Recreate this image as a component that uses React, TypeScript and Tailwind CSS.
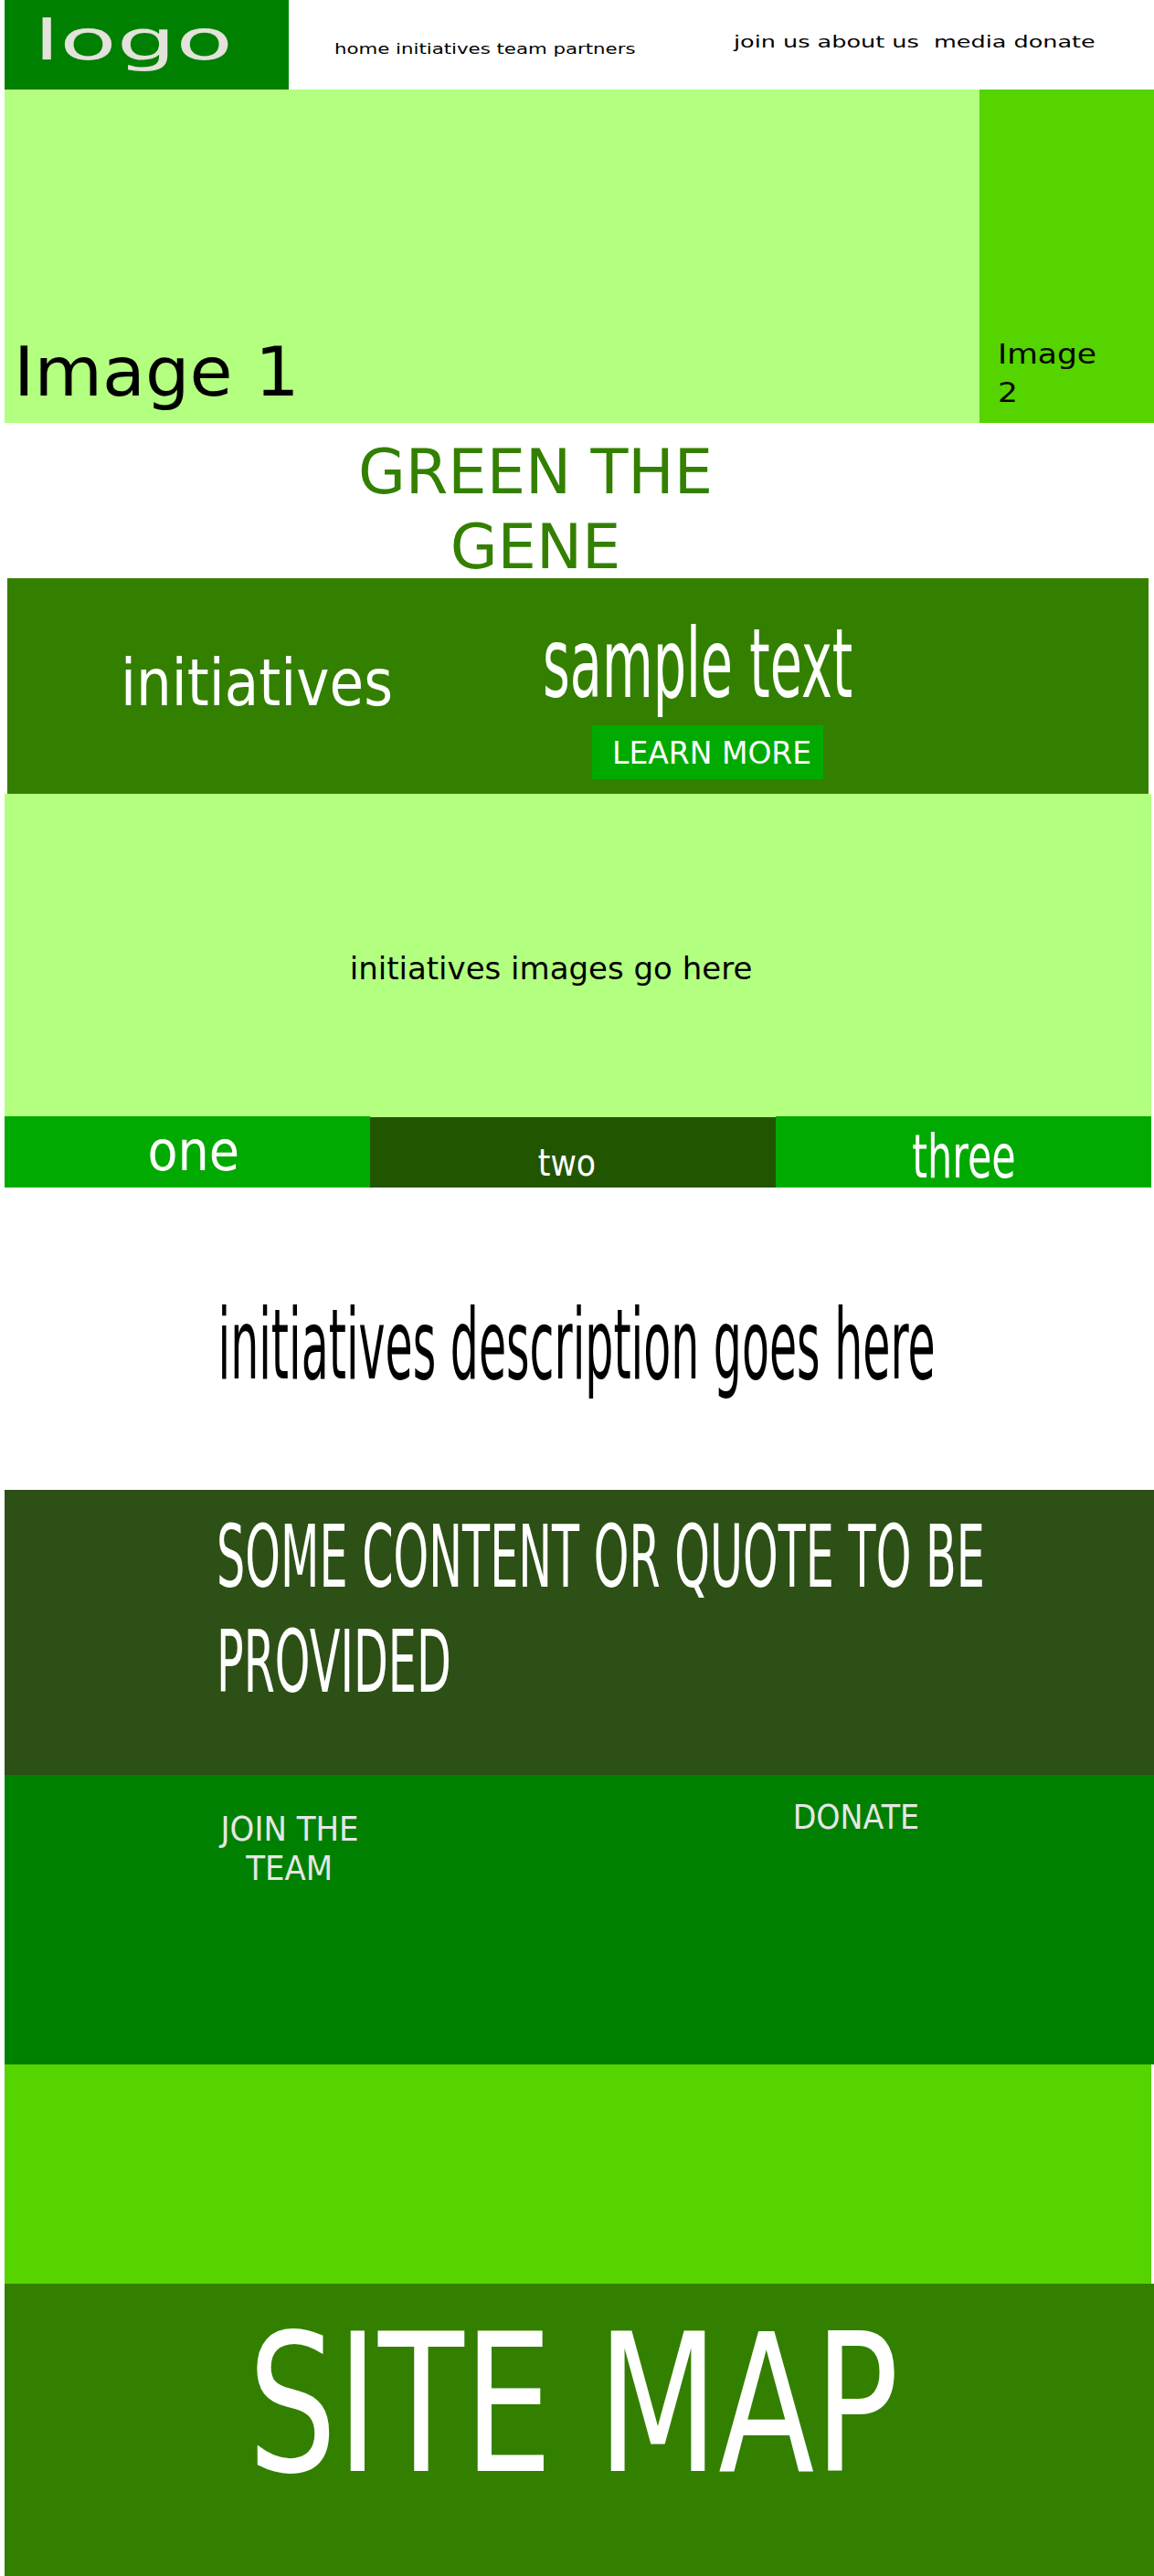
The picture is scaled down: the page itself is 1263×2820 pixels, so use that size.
export default function App() {
  return (
    <div className="min-h-[2820px] w-full overflow-hidden bg-white font-['DejaVu_Sans',sans-serif] text-black">
      {/* header */}
      <header className="flex h-[98px] pl-[5px]">
        <div className="w-[311px] bg-[#008000] pl-[32px] pt-[14px]">
          <span className="inline-block origin-left scale-x-[1.7] whitespace-nowrap text-[60px] leading-none text-[#e3e2db]">
            logo
          </span>
        </div>
        <nav className="w-[487px] pl-[50px] pt-[42px]">
          <span className="inline-block origin-left scale-x-[1.33] whitespace-nowrap text-[16px] leading-none">
            home initiatives team partners
          </span>
        </nav>
        <nav className="pt-[35px]">
          <span className="inline-block origin-left scale-x-[1.5] whitespace-pre text-[17px] leading-none">
            {'join us about us  media donate'}
          </span>
        </nav>
      </header>

      {/* hero */}
      <section className="flex h-[365px] pl-[5px]">
        <div className="w-[1067px] bg-[#b3ff80] pl-[10px] pt-[272px]">
          <span className="inline-block origin-left scale-x-[1.02] whitespace-nowrap text-[75px] leading-none">
            Image 1
          </span>
        </div>
        <div className="flex-1 bg-[#55d400] pl-[20px] pt-[269px] text-[30px] leading-[42px]">
          <span className="block origin-left scale-x-[1.15]">Image</span>
          <span className="block origin-left scale-x-[1.15]">2</span>
        </div>
      </section>

      {/* title */}
      <section className="flex h-[170px] justify-center pr-[91px] pt-[13px]">
        <h1 className="text-center text-[67px] leading-[82px] text-[#338000]">
          GREEN THE
          <br />
          GENE
        </h1>
      </section>

      {/* initiatives banner */}
      <section className="ml-[8px] grid h-[236px] w-[1249px] grid-cols-[586px_1fr] bg-[#338000] text-white">
        <div className="pl-[124px] pt-[78px]">
          <span className="inline-block origin-left scale-x-[0.85] whitespace-nowrap text-[72px] leading-none">
            initiatives
          </span>
        </div>
        <div className="pt-[42px]">
          <span className="block origin-left scale-x-[0.545] whitespace-nowrap text-[105px] leading-none">
            sample text
          </span>
          <a className="ml-[54px] mt-[14px] block h-[59px] w-[253px] bg-[#00aa00] pl-[22px] pt-[14px] text-[33px] leading-none text-white">
            LEARN MORE
          </a>
        </div>
      </section>

      {/* images */}
      <section className="ml-[5px] flex h-[353px] w-[1255px] justify-center bg-[#b3ff80] pr-[59px] pt-[174px]">
        <span className="whitespace-nowrap text-[34px] leading-none">initiatives images go here</span>
      </section>

      {/* tabs */}
      <section className="flex h-[78px] pl-[5px] text-white">
        <div className="flex w-[400px] justify-center bg-[#00aa00] pl-[14px] pt-[8px]">
          <span className="inline-block h-fit scale-x-[0.9] text-[60px] leading-none">one</span>
        </div>
        <div className="flex w-[444px] justify-center border-t border-[#b3ff80] bg-[#225500] pr-[14px] pt-[30px]">
          <span className="inline-block h-fit scale-x-[0.87] text-[40px] leading-none">two</span>
        </div>
        <div className="flex w-[411px] justify-center bg-[#00aa00] pt-[12px]">
          <span className="inline-block h-fit scale-x-[0.66] text-[65px] leading-none">three</span>
        </div>
      </section>

      {/* description */}
      <section className="flex h-[331px] justify-center pt-[119px]">
        <span className="inline-block h-fit shrink-0 scale-x-[0.458] whitespace-nowrap text-[107px] leading-none">
          initiatives description goes here
        </span>
      </section>

      {/* quote */}
      <section className="ml-[5px] h-[312px] bg-[#2d5016] pl-[232px] pt-[16px] text-[95px] leading-[115px] text-white">
        <span className="block origin-left scale-x-[0.518] whitespace-nowrap">SOME CONTENT OR QUOTE TO BE</span>
        <span className="block origin-left scale-x-[0.518] whitespace-nowrap">PROVIDED</span>
      </section>

      {/* join / donate */}
      <section className="ml-[5px] flex h-[317px] bg-[#008000] text-[37px] leading-[43px] text-[#e6e6e6]">
        <div className="flex w-[624px] flex-col items-center pt-[38px]">
          <span className="inline-block scale-x-[0.92] whitespace-nowrap">JOIN THE</span>
          <span className="inline-block scale-x-[0.92] whitespace-nowrap">TEAM</span>
        </div>
        <div className="flex w-[616px] justify-center pt-[25px]">
          <span className="inline-block h-fit scale-x-[0.9] whitespace-nowrap">DONATE</span>
        </div>
      </section>

      {/* spacer band */}
      <section className="ml-[5px] h-[240px] w-[1255px] bg-[#55d400]" />

      {/* footer */}
      <footer className="ml-[5px] flex h-[320px] justify-center bg-[#338000] pr-[12px] pt-[27px] text-white">
        <span className="inline-block h-fit shrink-0 scale-x-[0.728] whitespace-nowrap text-[211px] leading-none">
          SITE MAP
        </span>
      </footer>
    </div>
  )
}
